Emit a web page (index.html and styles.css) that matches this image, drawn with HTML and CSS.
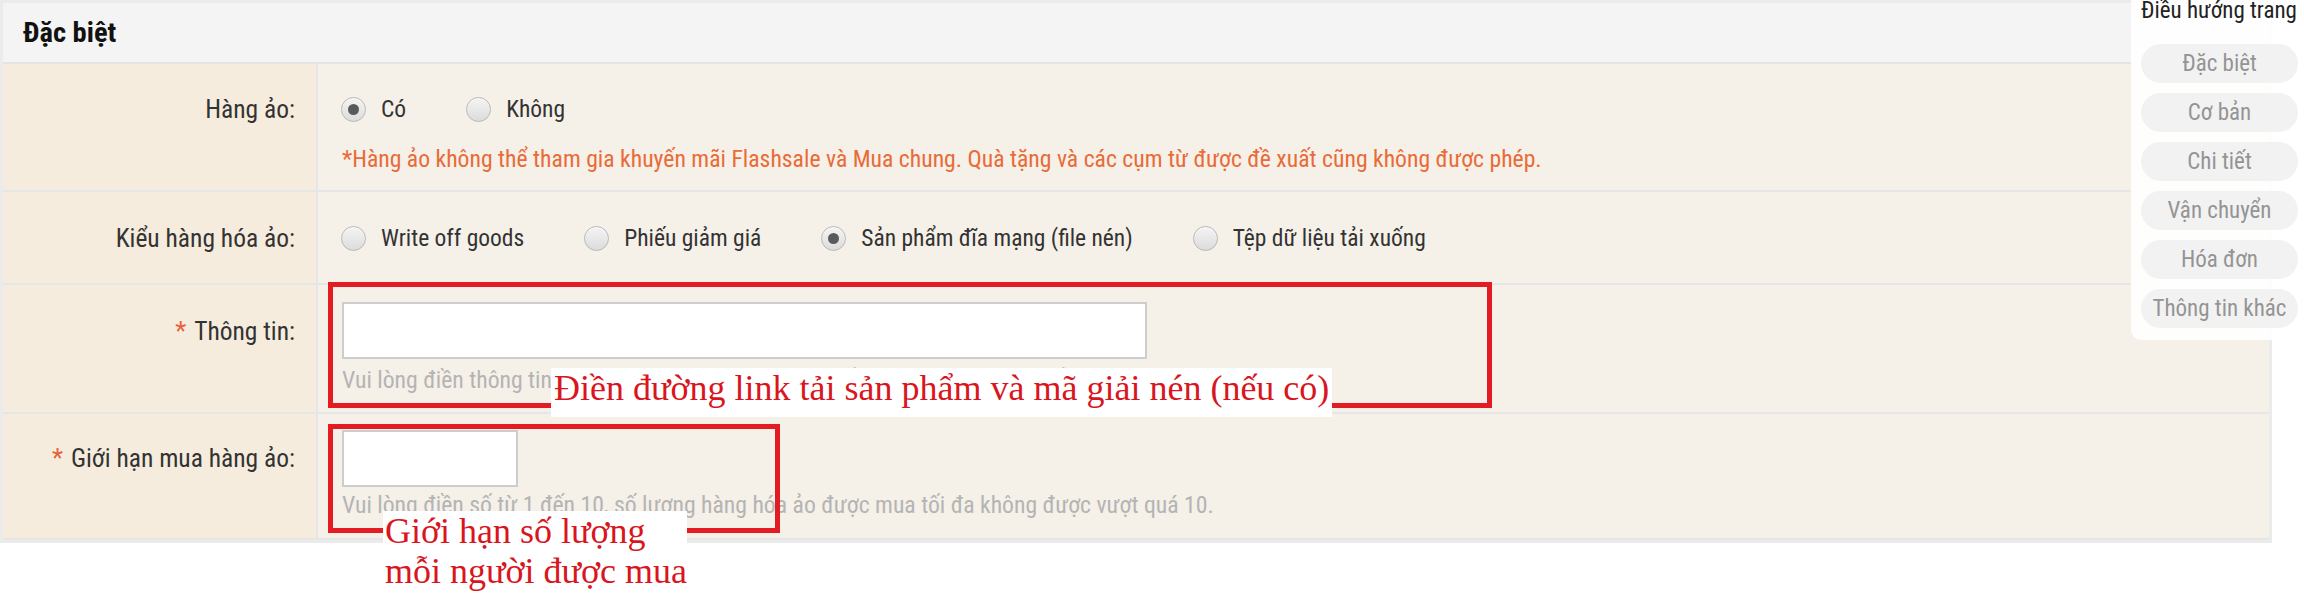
FILE: index.html
```html
<!DOCTYPE html>
<html lang="vi">
<head>
<meta charset="utf-8">
<title>Đặc biệt</title>
<link rel="stylesheet" href="styles.css">
</head>
<body>
<div class="page">
  <section class="panel">
    <div class="panel-head">Đặc biệt</div>

    <div class="row row-virtual">
      <div class="label">Hàng ảo:</div>
      <div class="value">
        <div class="radios">
          <label class="radio checked"><span class="dot"></span>Có</label>
          <label class="radio"><span class="dot"></span>Không</label>
        </div>
        <p class="note">*Hàng ảo không thể tham gia khuyến mãi Flashsale và Mua chung. Quà tặng và các cụm từ được đề xuất cũng không được phép.</p>
      </div>
    </div>

    <div class="row row-type">
      <div class="label">Kiểu hàng hóa ảo:</div>
      <div class="value">
        <div class="radios">
          <label class="radio"><span class="dot"></span>Write off goods</label>
          <label class="radio"><span class="dot"></span>Phiếu giảm giá</label>
          <label class="radio checked"><span class="dot"></span>Sản phẩm đĩa mạng (file nén)</label>
          <label class="radio"><span class="dot"></span>Tệp dữ liệu tải xuống</label>
        </div>
      </div>
    </div>

    <div class="row row-info">
      <div class="label"><span class="req">*</span>Thông tin:</div>
      <div class="value">
        <div class="input input-wide"></div>
        <p class="hint">Vui lòng điền thông tin đường dẫn tải xuống và mật khẩu giải nén của sản phẩm.</p>
      </div>
    </div>

    <div class="row row-limit">
      <div class="label"><span class="req">*</span>Giới hạn mua hàng ảo:</div>
      <div class="value">
        <div class="input input-short"></div>
        <p class="hint">Vui lòng điền số từ 1 đến 10, số lượng hàng hóa ảo được mua tối đa không được vượt quá 10.</p>
      </div>
    </div>
  </section>

  <div class="mark mark-info"></div>
  <div class="callout callout-info">Điền đường link tải sản phẩm và mã giải nén (nếu có)</div>

  <div class="mark mark-limit"></div>
  <div class="callout callout-limit">Giới hạn số lượng<br>mỗi người được mua</div>

  <nav class="page-nav">
    <div class="nav-title">Điều hướng trang</div>
    <a class="nav-pill">Đặc biệt</a>
    <a class="nav-pill">Cơ bản</a>
    <a class="nav-pill">Chi tiết</a>
    <a class="nav-pill">Vận chuyển</a>
    <a class="nav-pill">Hóa đơn</a>
    <a class="nav-pill">Thông tin khác</a>
  </nav>
</div>
</body>
</html>
```

FILE: styles.css
```css
* { box-sizing: border-box; }

html, body {
  margin: 0;
  padding: 0;
  background: #ffffff;
}

body {
  font-family: "Roboto Condensed", "Roboto", "Liberation Sans", sans-serif;
  color: #333333;
}

.page {
  position: relative;
  width: 2304px;
  height: 594px;
  overflow: hidden;
}

/* ---------- main panel ---------- */
.panel {
  width: 2272px;
  border: 3px solid #ebebeb;
  background: #f5f0e8;
}

.panel-head {
  height: 61px;
  line-height: 59px;
  padding-left: 20px;
  background: #f4f4f4;
  border-bottom: 2px solid #e4e4e4;
  font-size: 28.5px;
  font-weight: 700;
  color: #111111;
}

.row {
  display: grid;
  grid-template-columns: 315px 1fr;
  border-bottom: 2px solid #e6e6e6;
}

.label {
  background: #f6ecdd;
  border-right: 2px solid #e6e6e6;
  text-align: right;
  padding-right: 21px;
  font-size: 25.5px;
  line-height: 34px;
  color: #333333;
}

.req {
  color: #e8613c;
  margin-right: 8px;
}

.value {
  padding-left: 24px;
}

.row-virtual .label { padding-top: 28px; }
.row-virtual .value { padding-top: 28px; padding-bottom: 16px; }

.row-type .label { padding-top: 29px; }
.row-type .value { padding-top: 29px; padding-bottom: 28px; }

.row-info .label { padding-top: 29px; }
.row-info .value { padding-top: 17px; padding-bottom: 17px; }
.row-info .hint { margin-top: 6px; }

.row-limit .label { padding-top: 27px; }
.row-limit .value { padding-top: 16px; padding-bottom: 18px; }
.row-limit .hint { margin-top: 3px; }

/* radios */
.radios {
  display: flex;
  align-items: center;
  height: 34px;
  margin-left: -1px;
}

.radio {
  display: inline-flex;
  align-items: center;
  margin-right: 60px;
  font-size: 23.5px;
  line-height: 34px;
  color: #333333;
}

.dot {
  position: relative;
  width: 25px;
  height: 25px;
  margin-right: 15px;
  border-radius: 50%;
  border: 1px solid #b8b8b8;
  background: linear-gradient(180deg, #f4f4f4 0%, #dcdcdc 100%);
  box-shadow: inset 0 1px 1px rgba(255, 255, 255, 0.8);
}

.checked .dot::after {
  content: "";
  position: absolute;
  left: 6px;
  top: 6px;
  width: 11px;
  height: 11px;
  border-radius: 50%;
  background: #5a5a5a;
}

.note {
  margin: 18px 0 0;
  font-size: 23.7px;
  line-height: 30px;
  color: #e96b37;
  white-space: nowrap;
}

/* inputs */
.input {
  height: 57px;
  background: #ffffff;
  border: 2px solid #cdcdcd;
}

.input-wide { width: 805px; }
.input-short { width: 176px; }

.hint {
  margin: 0;
  font-size: 23.7px;
  line-height: 30px;
  color: #b4b4b4;
  white-space: nowrap;
}

/* ---------- annotations (overlay) ---------- */
.mark {
  position: absolute;
  border: 5px solid #e31b23;
}

.mark-info {
  left: 328px;
  top: 282px;
  width: 1164px;
  height: 126px;
}

.mark-limit {
  left: 328px;
  top: 424px;
  width: 452px;
  height: 109px;
}

.callout {
  position: absolute;
  background: #ffffff;
  font-family: "Liberation Serif", "Times New Roman", serif;
  font-size: 36px;
  line-height: 40px;
  color: #d9151d;
  white-space: nowrap;
}

.callout-info {
  left: 551px;
  top: 368px;
  width: 781px;
  height: 49px;
  padding-left: 3px;
}

.callout-limit {
  left: 383px;
  top: 511px;
  width: 304px;
  height: 90px;
  padding-left: 2px;
}

/* ---------- page nav (floating) ---------- */
.page-nav {
  position: absolute;
  top: 0;
  left: 2131px;
  width: 173px;
  height: 340px;
  padding: 0 6px 0 10px;
  background: rgba(255, 255, 255, 0.9);
  border-bottom-left-radius: 10px;
  display: flex;
  flex-direction: column;
}

.nav-title {
  margin-top: -4px;
  margin-bottom: 18px;
  font-size: 23px;
  line-height: 30px;
  color: #222222;
  white-space: nowrap;
}

.nav-pill {
  display: block;
  height: 39px;
  margin-bottom: 10px;
  border-radius: 20px;
  background: #f2f2f2;
  font-size: 23px;
  line-height: 39px;
  text-align: center;
  color: #949494;
  white-space: nowrap;
}
```
